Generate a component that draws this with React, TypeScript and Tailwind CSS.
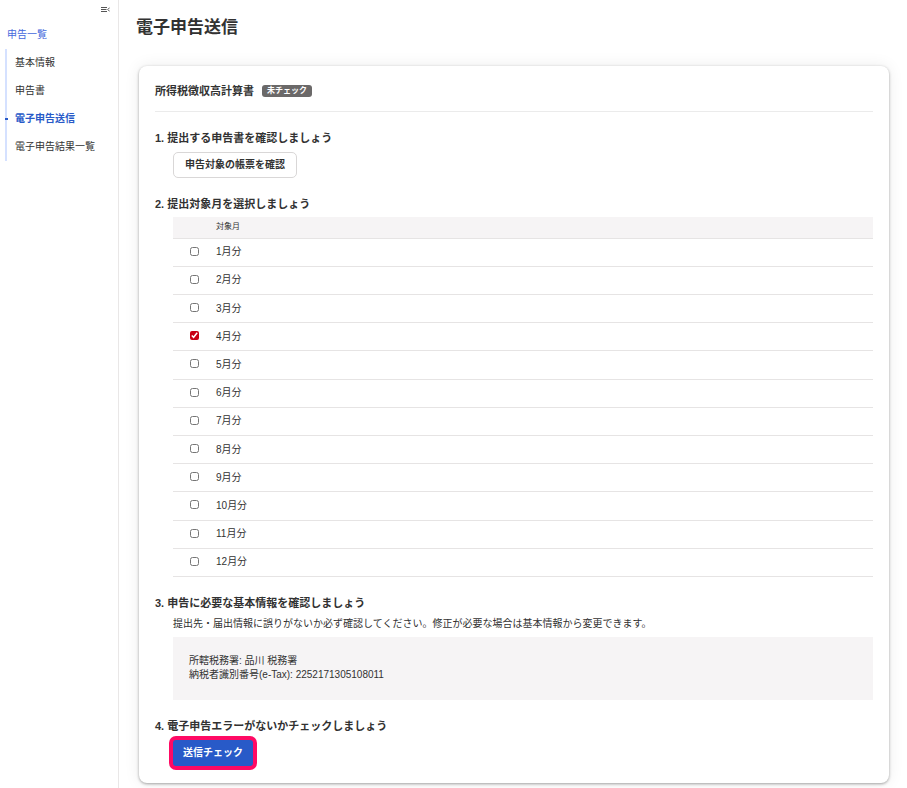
import { useState, type ReactNode } from "react";

const navItems = [
  { label: "基本情報", active: false },
  { label: "申告書", active: false },
  { label: "電子申告送信", active: true },
  { label: "電子申告結果一覧", active: false },
];

const months = Array.from({ length: 12 }, (_, i) => i + 1);

function CollapseIcon() {
  return (
    <svg width="9" height="8" viewBox="0 0 9 8" fill="none" stroke="#555" strokeWidth="1">
      <path d="M0 1.5h6M0 3.5h5.5M0 5.5h6" />
      <path d="M8.7 1.6L6.8 3.5L8.7 5.4" />
    </svg>
  );
}

function Step({ title, children }: { title: string; children: ReactNode }) {
  return (
    <section className="mt-[18px]">
      <h3 className="text-[11px] leading-4 font-bold">{title}</h3>
      {children}
    </section>
  );
}

export default function App() {
  const [selected, setSelected] = useState<number[]>([4]);

  const toggle = (month: number) => {
    setSelected((prev) => (prev.includes(month) ? prev.filter((m) => m !== month) : [...prev, month]));
  };

  return (
    <div className="flex min-h-screen bg-white font-['Liberation_Sans','Noto_Sans_CJK_JP',sans-serif] text-[10px] text-[#323232]">
      <aside className="w-[119px] shrink-0 border-r border-[#e9e7e7]">
        <div className="flex justify-end pt-[6px] pr-2">
          <button type="button" aria-label="メニューを閉じる">
            <CollapseIcon />
          </button>
        </div>
        <nav className="mt-3">
          <a href="#" className="ml-[7px] block leading-[18px] text-[#4468dc]">
            申告一覧
          </a>
          <ul className="mt-[5px] ml-[5px] border-l-2 border-[#d5e1ff]">
            {navItems.map((item) => (
              <li key={item.label} className="relative">
                {item.active && <span className="absolute top-[13px] -left-[2px] h-[2px] w-[3px] bg-[#285ac8]" />}
                <a
                  href="#"
                  className={
                    item.active
                      ? "block pl-2 leading-7 font-bold whitespace-nowrap text-[#285ac8]"
                      : "block pl-2 leading-7 whitespace-nowrap"
                  }
                >
                  {item.label}
                </a>
              </li>
            ))}
          </ul>
        </nav>
      </aside>

      <main className="min-w-0 flex-1 pr-[18px] pb-1 pl-5">
        <h1 className="-ml-[3px] pt-4 text-[17px] leading-6 font-bold">電子申告送信</h1>

        <div className="mt-[26px] rounded-lg px-4 pt-4 pb-[17px] shadow-[0_1px_3px_rgba(0,0,0,0.35),0_0_16px_rgba(0,0,0,0.08)]">
          <div className="flex items-center gap-2 border-b border-[#ebebeb] pb-[11px]">
            <h2 className="text-[11px] leading-[18px] font-bold">所得税徴収高計算書</h2>
            <span className="rounded-[3px] bg-[#6b6969] px-[5px] text-[8px] leading-3 font-bold text-white">
              未チェック
            </span>
          </div>

          <Step title="1. 提出する申告書を確認しましょう">
            <button
              type="button"
              className="mt-[6px] ml-[18px] block h-[26px] rounded-[5px] border border-[#d9d7d7] px-[11px] pb-[2px] font-bold"
            >
              申告対象の帳票を確認
            </button>
          </Step>

          <Step title="2. 提出対象月を選択しましょう">
            <div className="mt-[5px] pl-[18px]">
              <table className="h-[360px] w-full border-collapse text-left">
                <thead>
                  <tr className="h-[21px] border-b border-[#e6e4e4] bg-[#f6f4f5]">
                    <th className="w-[43px] p-0" aria-label="選択" />
                    <th className="p-0 text-[8px] leading-4 font-normal">対象月</th>
                  </tr>
                </thead>
                <tbody>
                  {months.map((month) => (
                    <tr key={month} className="border-b border-[#e6e4e4]">
                      <td className="p-0">
                        <input
                          id={`month-${month}`}
                          type="checkbox"
                          checked={selected.includes(month)}
                          onChange={() => toggle(month)}
                          className="mb-[2px] ml-[17px] block size-[9px] accent-[#c80014]"
                        />
                      </td>
                      <td className="p-0">
                        <label htmlFor={`month-${month}`} className="block leading-4">
                          {month}月分
                        </label>
                      </td>
                    </tr>
                  ))}
                </tbody>
              </table>
            </div>
          </Step>

          <Step title="3. 申告に必要な基本情報を確認しましょう">
            <div className="pl-[18px]">
              <p className="mt-[5px] leading-4">
                提出先・届出情報に誤りがないか必ず確認してください。修正が必要な場合は基本情報から変更できます。
              </p>
              <div className="mt-[5px] bg-[#f6f4f5] px-4 pt-[17px] pb-[18px] leading-[14px]">
                <p>所轄税務署: 品川 税務署</p>
                <p>納税者識別番号(e-Tax): 2252171305108011</p>
              </div>
            </div>
          </Step>

          <Step title="4. 電子申告エラーがないかチェックしましょう">
            <button
              type="button"
              className="mt-[6px] ml-[18px] block h-[26px] rounded-[3px] bg-[#285ac8] px-[10px] pb-[2px] font-bold text-white ring-4 ring-[#ff0a64]"
            >
              送信チェック
            </button>
          </Step>
        </div>
      </main>
    </div>
  );
}
